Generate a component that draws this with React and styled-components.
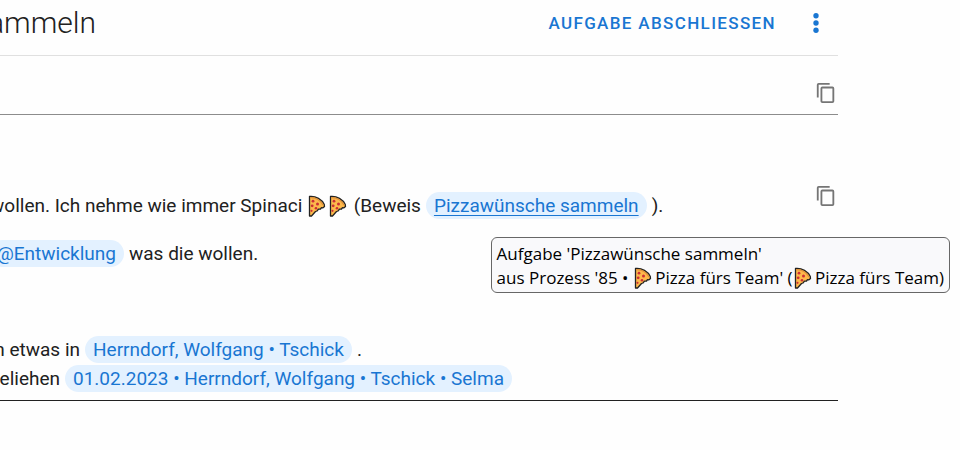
import React from 'react';
import styled, { createGlobalStyle } from 'styled-components';

const GlobalStyle = createGlobalStyle`
  *, *::before, *::after {
    box-sizing: border-box;
  }
  body {
    margin: 0;
    background: #fefefe;
    color: #212121;
    font-family: Roboto, 'Liberation Sans', sans-serif;
    font-size: 19px;
  }
`;

const S = {
  Page: styled.main`
    position: relative;
    min-height: 100vh;
    padding-right: 122px;
    overflow: hidden;
  `,
  Header: styled.header`
    display: flex;
    align-items: center;
    height: 56px;
    padding-bottom: 9px;
    border-bottom: 1px solid #e0e0e0;
  `,
  Title: styled.h1`
    display: flex;
    justify-content: flex-end;
    width: 96px;
    margin: 0;
    font-size: 30px;
    font-weight: 300;
    line-height: 40px;
    white-space: nowrap;
  `,
  FinishButton: styled.button`
    margin: 0 18px 0 auto;
    padding: 8px;
    border: 0;
    background: none;
    color: #1976d2;
    font: 500 17px/20px Roboto, sans-serif;
    letter-spacing: 0.08em;
    text-transform: uppercase;
    white-space: nowrap;
    cursor: pointer;
  `,
  IconButton: styled.button`
    display: flex;
    flex: none;
    padding: 0;
    margin: ${p => p.$margin || 0};
    border: 0;
    background: none;
    color: ${p => p.$color};
    cursor: pointer;
  `,
  Field: styled.section`
    display: flex;
    justify-content: flex-end;
    align-items: flex-start;
    padding: ${p => p.$padding};
    border-bottom: 1px solid ${p => p.$line};
  `,
  Text: styled.div`
    flex: 1;
    min-width: 0;
    padding-top: 6px;
  `,
  Line: styled.p`
    display: flex;
    align-items: center;
    height: 29px;
    margin: 0 0 ${p => p.$gap || 0}px;
    line-height: 27px;
    white-space: pre;
  `,
  Lead: styled.span`
    display: flex;
    flex: none;
    justify-content: flex-end;
    width: ${p => p.$width}px;
  `,
  Chip: styled.a`
    padding: 0 8px;
    margin: 0 5px;
    border-radius: 14px;
    background: #e3f1ff;
    color: #1976d2;
    text-decoration: ${p => (p.$active ? 'underline' : 'none')};
    text-decoration-thickness: 1px;
    text-underline-offset: 3px;
  `,
  Slice: styled.svg`
    flex: none;
    width: ${p => p.$width}px;
    height: 22px;
    overflow: visible;
  `,
  Tooltip: styled.div`
    position: absolute;
    top: 237px;
    right: 10px;
    padding: 4px 5px 2px;
    border: 1px solid #676767;
    border-radius: 6px;
    background: #f9f9fb;
    color: #000;
    font-family: 'Open Sans', 'Noto Sans', sans-serif;
    font-size: 17px;
    line-height: 24px;
    white-space: pre;
  `,
  TooltipLine: styled.div`
    display: flex;
    align-items: center;
    height: 24px;
  `,
};

const Pizza = ({ width = 21 }) => (
  <S.Slice $width={width} viewBox={`0 0 ${width} 22`} role="img" aria-label="Pizza">
    <path d="M2.500 1.500C9 .8 15 4.500 17.300 9.500L17.500 11.500L16 12.800L14.500 12.600L13.500 14L11.500 14.200L10 16L8.500 16.500L4.500 21H2.500Z" fill="#fdb94c" stroke="#222" strokeWidth="1.300" strokeLinejoin="round" />
    <path d="M3.200 2.700C9 2.500 13.500 5.500 16 10" fill="none" stroke="#e0913a" strokeWidth="1.300" />
    <g fill="#cb2f35">
      <circle cx="6" cy="6.200" r="1.400" />
      <circle cx="10.500" cy="9" r="1.500" />
      <circle cx="5.200" cy="10.800" r="1.400" />
      <circle cx="9" cy="13.300" r="1.300" />
      <circle cx="4.500" cy="15.800" r="1.100" />
    </g>
  </S.Slice>
);

const CopyButton = () => (
  <S.IconButton type="button" aria-label="Kopieren" $color="#757575" $margin="0 1px 0 0">
    <svg width="22" height="22" viewBox="0 0 24 24" fill="currentColor">
      <path d="M19 21H8V7h11m0-2H8a2 2 0 0 0-2 2v14a2 2 0 0 0 2 2h11a2 2 0 0 0 2-2V7a2 2 0 0 0-2-2m-3-4H4a2 2 0 0 0-2 2v14h2V3h12V1Z" />
    </svg>
  </S.IconButton>
);

const App = () => (
  <>
    <GlobalStyle />
    <S.Page>
      <S.Header>
        <S.Title>sammeln</S.Title>
        <S.FinishButton type="button">Aufgabe abschliessen</S.FinishButton>
        <S.IconButton type="button" aria-label="Mehr" $color="#1976d2" $margin="0 8px 0 0">
          <svg width="28" height="28" viewBox="0 0 24 24" fill="currentColor">
            <circle cx="12" cy="5.800" r="2.300" />
            <circle cx="12" cy="12" r="2.300" />
            <circle cx="12" cy="18.200" r="2.300" />
          </svg>
        </S.IconButton>
      </S.Header>
      <S.Field $line="#8c8c8c" $padding="26px 0 10px">
        <CopyButton />
      </S.Field>
      <S.Field $line="#212121" $padding="70px 0 7px">
        <S.Text>
          <S.Line $gap={19}>
            <S.Lead $width={307}>wollen. Ich nehme wie immer Spinaci </S.Lead>
            <Pizza />
            <Pizza />
            <span> (Beweis</span>
            <S.Chip href="#aufgabe" $active>Pizzawünsche sammeln</S.Chip>
            <span>).</span>
          </S.Line>
          <S.Line $gap={67}>
            <S.Lead $width={129}>
              <S.Chip href="#entwicklung">@Entwicklung</S.Chip>
            </S.Lead>
            <span>was die wollen.</span>
          </S.Line>
          <S.Line>
            <S.Lead $width={80}>n etwas in</S.Lead>
            <S.Chip href="#tschick">Herrndorf, Wolfgang • Tschick</S.Chip>
            <span>.</span>
          </S.Line>
          <S.Line>
            <S.Lead $width={60}>geliehen</S.Lead>
            <S.Chip href="#ausleihe">01.02.2023 • Herrndorf, Wolfgang • Tschick • Selma</S.Chip>
          </S.Line>
        </S.Text>
        <CopyButton />
      </S.Field>
      <S.Tooltip role="tooltip">
        <S.TooltipLine>Aufgabe 'Pizzawünsche sammeln'</S.TooltipLine>
        <S.TooltipLine>
          <span>aus Prozess '85 • </span>
          <Pizza width={18} />
          <span> Pizza fürs Team' (</span>
          <Pizza width={18} />
          <span> Pizza fürs Team)</span>
        </S.TooltipLine>
      </S.Tooltip>
    </S.Page>
  </>
);

export default App;
